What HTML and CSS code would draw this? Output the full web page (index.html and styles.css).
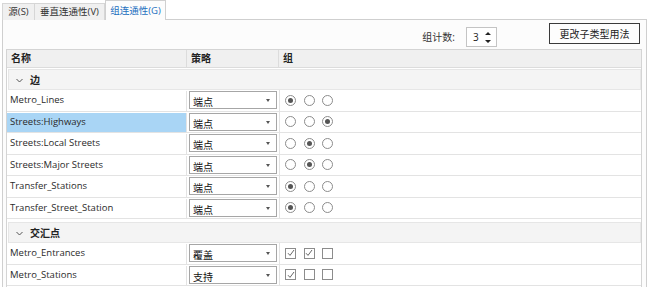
FILE: index.html
```html
<!DOCTYPE html>
<html lang="zh">
<head>
  <meta charset="UTF-8" />
  <title>组连通性</title>
  <link rel="stylesheet" href="styles.css">
</head>
<body>
<div class="tabs">
  <div class="tab t1">源(S)</div>
  <div class="tab t2">垂直连通性(V)</div>
  <div class="tab t3 active">组连通性(G)</div>
</div>
<section class="panel">
  <div class="toolbar">
    <span class="count-label">组计数:</span>
    <div class="spin">
      <span>3</span>
      <svg class="spin-arrows" width="6" height="13" viewBox="0 0 6 13">
        <path d="M0 4 L3 1 L6 4 Z M0 9 L3 12 L6 9 Z" fill="#222"/>
      </svg>
    </div>
    <button class="btn">更改子类型用法</button>
  </div>

  <div class="grid">
    <div class="head">
      <div class="hcell">名称</div>
      <div class="hcell">策略</div>
      <div class="hcell last">组</div>
    </div>

    <div class="group">
      <svg class="chev" width="7" height="5" viewBox="0 0 7 5"><path d="M0.5 1 L3.5 4 L6.5 1" fill="none" stroke="#555" stroke-width="1"/></svg>
      <span>边</span>
    </div>

    <div class="row">
      <div class="name">Metro_Lines</div>
      <div class="strat"><div class="select">端点<i class="arrow"></i></div></div>
      <div class="opts"><span class="radio on"></span><span class="radio"></span><span class="radio"></span></div>
    </div>
    <div class="row">
      <div class="name selected">Streets:Highways</div>
      <div class="strat"><div class="select">端点<i class="arrow"></i></div></div>
      <div class="opts"><span class="radio"></span><span class="radio"></span><span class="radio on"></span></div>
    </div>
    <div class="row">
      <div class="name">Streets:Local Streets</div>
      <div class="strat"><div class="select">端点<i class="arrow"></i></div></div>
      <div class="opts"><span class="radio"></span><span class="radio on"></span><span class="radio"></span></div>
    </div>
    <div class="row">
      <div class="name">Streets:Major Streets</div>
      <div class="strat"><div class="select">端点<i class="arrow"></i></div></div>
      <div class="opts"><span class="radio"></span><span class="radio on"></span><span class="radio"></span></div>
    </div>
    <div class="row">
      <div class="name">Transfer_Stations</div>
      <div class="strat"><div class="select">端点<i class="arrow"></i></div></div>
      <div class="opts"><span class="radio on"></span><span class="radio"></span><span class="radio"></span></div>
    </div>
    <div class="row">
      <div class="name">Transfer_Street_Station</div>
      <div class="strat"><div class="select">端点<i class="arrow"></i></div></div>
      <div class="opts"><span class="radio on"></span><span class="radio"></span><span class="radio"></span></div>
    </div>

    <div class="group second">
      <svg class="chev" width="7" height="5" viewBox="0 0 7 5"><path d="M0.5 1 L3.5 4 L6.5 1" fill="none" stroke="#555" stroke-width="1"/></svg>
      <span>交汇点</span>
    </div>

    <div class="row">
      <div class="name">Metro_Entrances</div>
      <div class="strat"><div class="select">覆盖<i class="arrow"></i></div></div>
      <div class="opts">
        <span class="check"><svg width="8" height="8" viewBox="0 0 8 8"><path d="M1 4.2 L3 6.4 L7 1" fill="none" stroke="#666" stroke-width="1"/></svg></span>
        <span class="check"><svg width="8" height="8" viewBox="0 0 8 8"><path d="M1 4.2 L3 6.4 L7 1" fill="none" stroke="#666" stroke-width="1"/></svg></span>
        <span class="check"></span>
      </div>
    </div>
    <div class="row">
      <div class="name">Metro_Stations</div>
      <div class="strat"><div class="select">支持<i class="arrow"></i></div></div>
      <div class="opts">
        <span class="check"><svg width="8" height="8" viewBox="0 0 8 8"><path d="M1 4.2 L3 6.4 L7 1" fill="none" stroke="#666" stroke-width="1"/></svg></span>
        <span class="check"></span>
        <span class="check"></span>
      </div>
    </div>
  </div>
</section>
</body>
</html>
```

FILE: styles.css
```css
body {
  margin: 0;
  width: 649px;
  height: 287px;
  overflow: hidden;
  background-color: #fff;
  font-family: "Open Sans", "Noto Sans CJK SC", sans-serif;
  font-size: 9.5px;
  color: #222;
}
.tabs {
  display: flex;
  align-items: flex-end;
  height: 20px;
  padding-left: 2px;
}
.tab {
  box-sizing: border-box;
  height: 17px;
  line-height: 16px;
  border: 1px solid #d6d6d6;
  border-bottom: none;
  background-color: #f0f0f0;
  text-align: center;
  color: #333;
}
.t1 {
  width: 33px;
}
.t2 {
  width: 70px;
  border-left: none;
}
.t3 {
  width: 61px;
}
.tab.active {
  position: relative;
  z-index: 1;
  height: 20px;
  line-height: 20px;
  background-color: #fcfcfc;
  color: #1d6fbf;
  border-color: #d0d0d0;
}
.panel {
  box-sizing: border-box;
  margin-top: -1px;
  margin-left: 2px;
  width: 645px;
  height: 268px;
  border: 1px solid #cfcfcf;
  border-bottom: none;
  background-color: #fcfcfc;
  padding: 0 4px 0 3px;
}
.toolbar {
  display: flex;
  align-items: flex-start;
  justify-content: flex-end;
  height: 29px;
  padding-right: 2px;
}
.count-label {
  margin-top: 9px;
  margin-right: 11px;
  font-size: 10px;
  color: #333;
}
.spin {
  box-sizing: border-box;
  display: flex;
  align-items: center;
  justify-content: space-between;
  margin-top: 7px;
  width: 31px;
  height: 20px;
  padding: 0 5px 0 6px;
  border: 1px solid #c4c4c4;
  background-color: #fff;
  font-size: 10px;
}
.btn {
  box-sizing: border-box;
  margin-top: 3px;
  margin-left: 52px;
  width: 91px;
  height: 21px;
  padding: 0;
  border: 1px solid #3a3a3a;
  background-color: #fdfdfd;
  font-family: "Noto Sans CJK SC", sans-serif;
  font-size: 10px;
  color: #222;
}
.grid {
  border: 1px solid #d4d4d4;
  border-bottom: none;
  background-color: #fff;
  height: 240px;
}
.head {
  display: grid;
  grid-template-columns: 180px 92px 1fr;
  height: 17px;
  background-color: #f0f0f0;
  border-bottom: 1px solid #dcdcdc;
}
.hcell {
  border-right: 1px solid #dcdcdc;
  padding-left: 4px;
  line-height: 17px;
  font-weight: bold;
  font-size: 10px;
}
.hcell.last {
  border-right: none;
}
.group {
  display: flex;
  align-items: center;
  gap: 7px;
  height: 19px;
  margin: 1px 0 0 1px;
  padding-left: 7px;
  background-color: #f4f4f4;
  border: 1px solid #e6e6e6;
  font-weight: bold;
  font-size: 10px;
}
.group.second {
  margin-top: 3px;
}
.chev {
  margin-top: 1px;
}
.row {
  box-sizing: border-box;
  display: grid;
  grid-template-columns: 180px 92px 1fr;
  height: 21.5px;
  border-bottom: 1px solid #e3e3e3;
}
.name {
  display: flex;
  align-items: center;
  padding-left: 3px;
  padding-bottom: 2px;
  margin-top: 1px;
  border-right: 1px solid #e3e3e3;
  color: #2a2a2a;
}
.name.selected {
  background-color: #a9d5f5;
}
.strat {
  display: flex;
  align-items: center;
  padding-left: 2px;
}
.select {
  box-sizing: border-box;
  position: relative;
  width: 88px;
  height: 18px;
  padding: 3px 0 0 3px;
  border: 1px solid #a6a6a6;
  background-color: #fff;
  font-family: "Noto Sans CJK SC", sans-serif;
  font-size: 10px;
  line-height: 14px;
  color: #111;
}
.arrow {
  position: absolute;
  right: 6px;
  top: 7px;
  width: 0;
  height: 0;
  border-left: 2px solid transparent;
  border-right: 2px solid transparent;
  border-top: 3px solid #555;
}
.opts {
  display: flex;
  align-items: center;
  gap: 7.5px;
  padding-left: 5px;
  border-left: 1px solid #e3e3e3;
}
.radio {
  box-sizing: border-box;
  display: flex;
  align-items: center;
  justify-content: center;
  width: 11px;
  height: 11px;
  border: 1px solid #8c8c8c;
  border-radius: 50%;
  background-color: #fff;
}
.radio.on::after {
  content: "";
  width: 5px;
  height: 5px;
  border-radius: 50%;
  background-color: #555;
}
.check {
  box-sizing: border-box;
  display: flex;
  align-items: center;
  justify-content: center;
  width: 11px;
  height: 11px;
  border: 1px solid #8c8c8c;
  background-color: #fff;
}
```
